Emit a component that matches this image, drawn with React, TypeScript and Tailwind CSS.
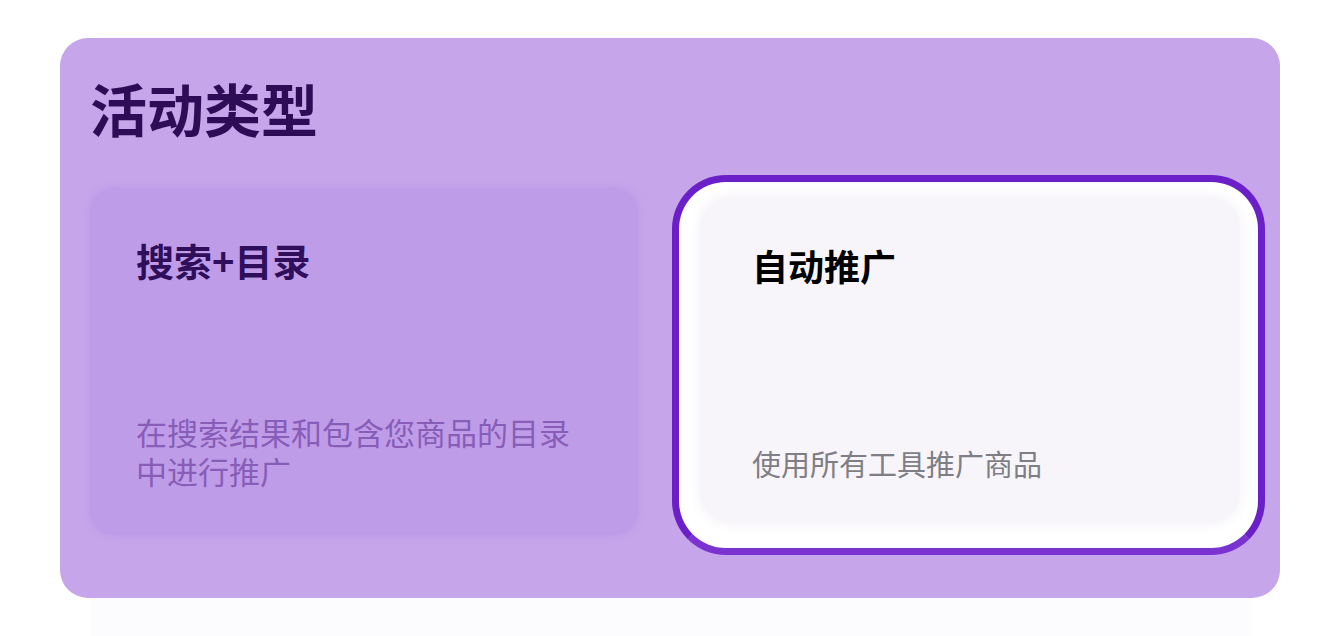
// Campaign type picker: two option cards, second one selected

const FONT = { fontFamily: '"Noto Sans CJK SC", "Noto Sans", sans-serif' };

function OptionCard() {
  return (
    <div className="w-[548px] h-[347px] shrink-0 rounded-[24px] bg-[#bf9ce8] shadow-[0_0_6px_2px_#c09de8] flex flex-col justify-between pt-[53px] pb-[45px] pl-[46px]">
      <div className="text-[38px] leading-[38px] font-bold text-[#2f0e5b]">搜索+目录</div>
      <p className="w-[440px] text-[31px] leading-[39px] text-[#875db8]">
        在搜索结果和包含您商品的目录中进行推广
      </p>
    </div>
  );
}

function SelectedCard() {
  return (
    <div className="w-[593px] h-[380px] shrink-0 rounded-[54px] border-[7px] border-[#6b1fc8] border-b-[#7a33d0] bg-white flex flex-col">
      <div className="flex-1 ml-[21px] mr-[18px] mt-[15px] mb-[25px] rounded-[30px] bg-[#f7f5fa] shadow-[0_0_8px_4px_#f8f6fa] flex flex-col justify-between pt-[50px] pb-[42px] pl-[52px]">
        <div className="text-[36px] leading-[36px] font-bold text-black">自动推广</div>
        <p className="text-[29px] leading-[36px] text-[#7f7e84]">使用所有工具推广商品</p>
      </div>
    </div>
  );
}

export default function App() {
  return (
    <div className="w-[1344px] h-[636px] bg-white flex flex-col pt-[38px] pl-[60px]" style={FONT}>
      <div className="w-[1220px] h-[560px] shrink-0 rounded-[28px] bg-[#c6a5ea] pl-[30px] pt-[36px]">
        <h1 className="text-[57px] leading-[66px] font-bold text-[#2e0d57]">活动类型</h1>
        <div className="flex items-start mt-[48px] gap-[34px]">
          <OptionCard />
          <div className="-mt-[13px]">
            <SelectedCard />
          </div>
        </div>
      </div>
      <div className="flex-1 ml-[30px] w-[1160px] bg-[#fcfbfe]" />
    </div>
  );
}
